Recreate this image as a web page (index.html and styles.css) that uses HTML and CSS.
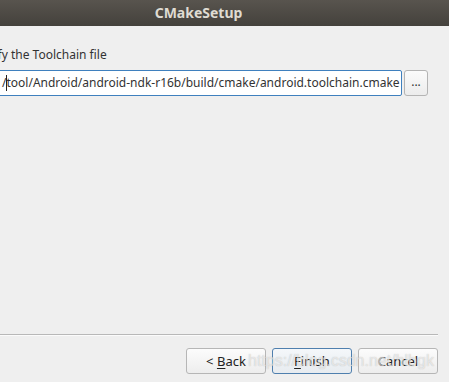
FILE: index.html
```html
<!DOCTYPE html>
<html lang="en">
<head>
  <meta charset="UTF-8">
  <title>CMakeSetup</title>
  <link rel="stylesheet" href="styles.css">
</head>
<body>

  <!-- Barra de título -->
  <header class="titlebar">CMakeSetup</header>

  <main class="dialog">
    <div class="field">
      <label class="field-label" for="toolchain">Specify the Toolchain file</label>
      <div class="field-row">
        <div class="path-input" id="toolchain">/<span class="caret"></span>tool/Android/android-ndk-r16b/build/cmake/android.toolchain.cmake</div>
        <button class="browse-btn">...</button>
      </div>
    </div>

    <div class="spacer"></div>

    <hr class="separator">

    <div class="actions">
      <button class="btn">&lt; <u>B</u>ack</button>
      <button class="btn btn-default"><u>F</u>inish</button>
      <button class="btn">Cancel</button>
    </div>
  </main>

  <span class="watermark">https://blog.csdn.net/hlbgk</span>

</body>
</html>
```

FILE: styles.css
```css
/* Ventana */
html, body {
  height: 100%;
}

body {
  margin: 0;
  background-color: #efefef;
  color: #333;
  font-family: 'Noto Sans', 'DejaVu Sans', sans-serif;
  font-size: 12px;
  overflow: hidden;
  display: flex;
  flex-direction: column;
  position: relative;
}

.titlebar {
  height: 26px;
  line-height: 25px;
  flex-shrink: 0;
  background: linear-gradient(#58544e, #44413c);
  color: #dfdbd2;
  font-weight: bold;
  font-size: 14px;
  text-align: center;
  padding-right: 52px;
}

.dialog {
  flex: 1;
  display: flex;
  flex-direction: column;
  margin-left: -32px;
  margin-right: 12px;
}

/* Campo del toolchain */
.field {
  padding-top: 20px;
}

.field-label {
  display: block;
  line-height: 18px;
  margin-bottom: 6px;
}

.field-row {
  display: flex;
  gap: 2px;
}

.path-input {
  width: 434px;
  height: 26px;
  box-sizing: border-box;
  border: 1px solid #3f80be;
  border-radius: 2px;
  background-color: #fff;
  font-size: 12px;
  line-height: 23px;
  padding-left: 33px;
  white-space: nowrap;
  overflow: hidden;
}

.caret {
  display: inline-block;
  width: 1px;
  height: 16px;
  margin: 0 -1px 0 0;
  vertical-align: -4px;
  background-color: #222;
}

.browse-btn {
  width: 24px;
  height: 26px;
  border: 1px solid #b4b4b4;
  border-radius: 3px;
  background: linear-gradient(#fbfbfb, #ececec);
  color: #333;
  font-family: inherit;
  font-size: 12px;
  padding: 0 0 4px;
}

.spacer {
  flex: 1;
}

/* Separador y botones */
.separator {
  margin: 0 -1px 12px 0;
  border: 0;
  border-top: 1px solid #b8b8b8;
  border-bottom: 1px solid #fbfbfb;
}

.actions {
  display: flex;
  justify-content: flex-end;
  gap: 6px;
  margin-right: -1px;
  margin-bottom: 8px;
}

.btn {
  width: 80px;
  height: 26px;
  border: 1px solid #b6b6b6;
  border-radius: 3px;
  background: linear-gradient(#fcfcfc, #ededed);
  color: #222;
  font-family: inherit;
  font-size: 13px;
  padding: 0;
}

.btn-default {
  border-color: #4f7fae;
  background: linear-gradient(#f4f7fa, #e7ebef);
}

.btn u {
  text-underline-offset: 2px;
}

.watermark {
  position: absolute;
  left: 248px;
  bottom: 12px;
  color: rgba(255, 255, 255, 0.6);
  font-family: 'Liberation Sans', sans-serif;
  font-size: 16px;
  text-shadow: 0 0 1px rgba(110, 110, 110, 0.45);
  pointer-events: none;
}
```
